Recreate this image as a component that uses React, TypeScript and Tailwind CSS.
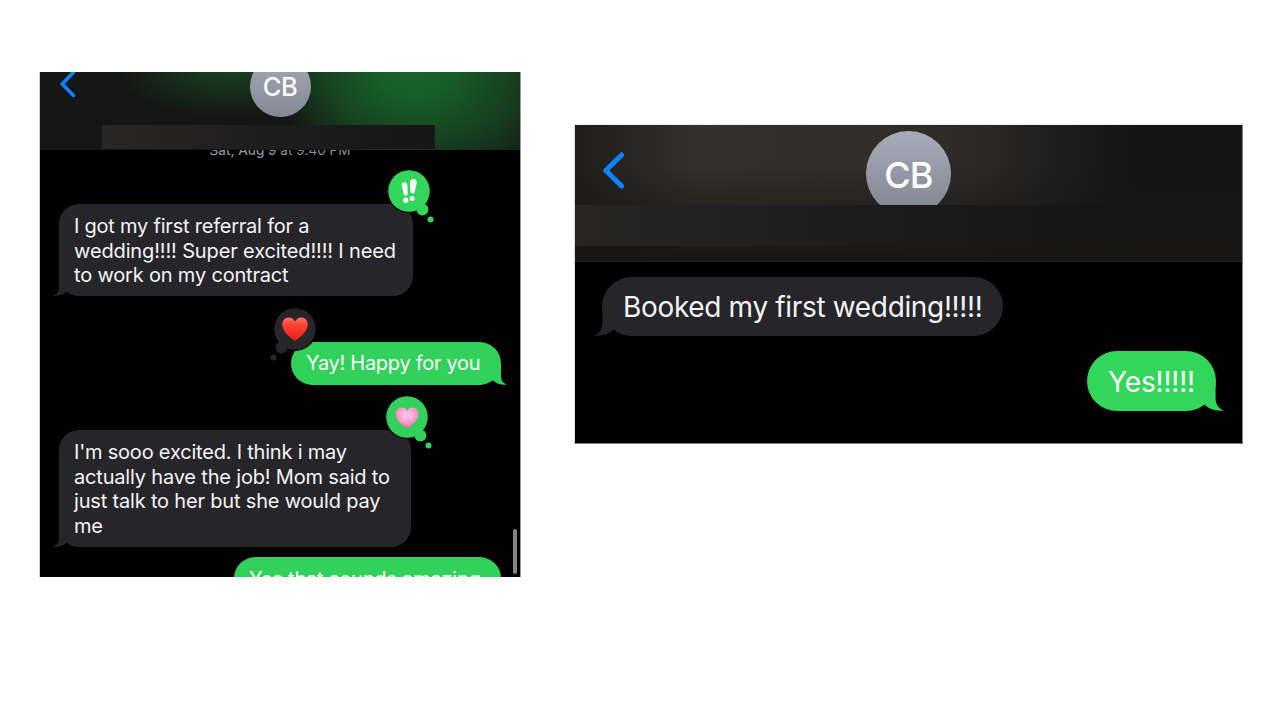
import React from 'react';
import clsx from 'clsx';

interface TailProps {
  side: 'left' | 'right';
  className: string;
}

const Tail: React.FC<TailProps> = ({ side, className }) => (
  <svg
    viewBox="0 0 20 20"
    className={clsx('absolute bottom-0 fill-current', side === 'right' && '-scale-x-100', className)}
  >
    <path d="M6 0 V10.5 C6 15.5 3.8 18.2 0 19.6 C5.2 20.4 10 19.2 13.8 15.6 L20 10 V0 Z" />
  </svg>
);

interface ReactionProps {
  side: 'left' | 'right';
  className: string;
  children: React.ReactNode;
}

// Tapback: big circle with two trailing dots
const Reaction: React.FC<ReactionProps> = ({ side, className, children }) => (
  <svg viewBox="0 0 48 56" className={clsx('absolute h-14 w-12', className)}>
    <g transform={side === 'left' ? 'translate(48 0) scale(-1 1)' : undefined}>
      <circle cx="22" cy="22" r="22" fill="#000" />
      <circle cx="22" cy="22" r="20.8" fill="currentColor" />
      <circle cx="35.4" cy="40.4" r="6" fill="currentColor" />
      <circle cx="43.5" cy="50.4" r="3" fill="currentColor" />
    </g>
    {children}
  </svg>
);

const HEART =
  'M0 12.4 C-4 9.6 -12.8 3.6 -12.8 -4 C-12.8 -8.2 -9.8 -11 -6.3 -11 C-3.5 -11 -1.2 -9.4 0 -6.9 C1.2 -9.4 3.5 -11 6.3 -11 C9.8 -11 12.8 -8.2 12.8 -4 C12.8 3.6 4 9.6 0 12.4 Z';

const Line: React.FC<{ className?: string; children: React.ReactNode }> = ({ className, children }) => (
  <span className={clsx('block whitespace-nowrap', className)}>{children}</span>
);

const ReferralChat: React.FC = () => (
  <section className="ml-[39px] mt-[72px] flex h-[505px] w-[482px] flex-col overflow-hidden border-l border-r border-l-[#cfcfcf] border-r-[#9c9c9c] bg-black">
    {/* Header */}
    <header className="relative flex h-[78px] shrink-0 justify-center overflow-hidden bg-[#151515] bg-[radial-gradient(ellipse_145px_115px_at_375px_-4px,#17652a_0%,#175d28_28%,#174521_60%,#15151500_100%),radial-gradient(ellipse_120px_54px_at_190px_-8px,#1a4823_0%,#172e1b_50%,#15151500_100%),radial-gradient(ellipse_100px_110px_at_440px_20px,#17371e_0%,#15151500_100%)]">
      <svg viewBox="0 0 18 30" className="absolute left-[19px] top-[-3px] h-[30px] w-[18px]">
        <path d="M14.5 3.2 L3.2 15 L14.5 26.4" fill="none" stroke="#0a84ff" strokeWidth="3.6" strokeLinecap="round" strokeLinejoin="round" />
      </svg>
      <div className="-mt-4 flex size-[61px] items-center justify-center rounded-full bg-linear-to-b from-[#a5aab8] to-[#858893] pt-0.5 text-[25.5px] font-medium tracking-[-0.4px] text-white">
        CB
      </div>
      <div className="absolute left-[62px] top-[53px] h-6 w-[333px] bg-linear-to-r from-[#292725] via-[#1e1d1d] to-[#161616]" />
    </header>

    {/* Messages */}
    <div className="flex flex-1 flex-col overflow-hidden">
      <p className="-mt-[9px] h-[18px] shrink-0 whitespace-nowrap text-center text-[13.5px] leading-[18px] tracking-[0.02px] text-[#8e8e93]">
        <span className="font-medium">Sat, Aug 9</span> at 9:40 PM
      </p>

      <div className="relative ml-[19px] mt-[45px] h-[92px] w-[354px] shrink-0 rounded-[20px] bg-[#26252a] px-[15px] pt-[10px] text-xl leading-[24.5px] text-[#f4f4f4]">
        <Tail side="left" className="-left-1.5 size-5 text-[#26252a]" />
        <Line className="tracking-[-0.22px]">I got my first referral for a</Line>
        <Line className="tracking-[-0.13px]">wedding!!!! Super excited!!!! I need</Line>
        <Line className="tracking-[-0.18px]">to work on my contract</Line>
        <Reaction side="right" className="-top-[35px] left-[328px] text-[#32d65b]">
          <g fill="#fff">
            <path d="M14.7 16.8 C14.4 14.4 15.4 13.2 17.2 13.2 C19.2 13.2 20.4 14.6 20.5 17 L20.6 24.4 C20.6 27.2 17.3 27.4 16.7 24.8 Z" />
            <circle cx="18.7" cy="31.2" r="2.6" />
            <path d="M23 14.2 C23 11.6 24.4 10 26.5 10 C28.7 10 29.9 11.7 29.7 14 L27.9 22.4 C27.3 25.2 23.6 25 23.4 22.2 Z" />
            <circle cx="25.1" cy="29.4" r="2.5" />
          </g>
        </Reaction>
      </div>

      <div className="relative ml-[251px] mt-[46px] h-[43px] w-[210px] shrink-0 rounded-[21.5px] bg-[#32d15b] px-[15px] pt-[9px] text-xl leading-[24.5px] text-white">
        <Tail side="right" className="-right-1.5 size-5 text-[#32d15b]" />
        <Line className="tracking-[-0.28px]">Yay! Happy for you</Line>
        <Reaction side="left" className="-left-[22.5px] -top-[35px] text-[#26252a]">
          <defs>
            <linearGradient id="redHeart" x1="0" y1="0" x2="0" y2="1">
              <stop offset="0" stopColor="#ff7668" />
              <stop offset="0.3" stopColor="#fb4436" />
              <stop offset="1" stopColor="#ee1f12" />
            </linearGradient>
          </defs>
          <path d={HEART} transform="translate(26 21.5)" fill="url(#redHeart)" />
        </Reaction>
      </div>

      <div className="relative ml-[19px] mt-[45px] h-[117px] w-[352px] shrink-0 rounded-[20px] bg-[#26252a] px-[15px] pt-[10px] text-xl leading-[24.5px] text-[#f4f4f4]">
        <Tail side="left" className="-left-1.5 size-5 text-[#26252a]" />
        <Line className="tracking-[-0.2px]">I'm sooo excited. I think i may</Line>
        <Line className="tracking-[-0.18px]">actually have the job! Mom said to</Line>
        <Line className="tracking-[-0.18px]">just talk to her but she would pay</Line>
        <Line className="tracking-[-0.2px]">me</Line>
        <Reaction side="right" className="-top-[35px] left-[325.5px] text-[#32d15b]">
          <defs>
            <radialGradient id="pinkHeart" cx="0.5" cy="0.35" r="0.65">
              <stop offset="0" stopColor="#ffc8ec" />
              <stop offset="0.55" stopColor="#ff9fd4" />
              <stop offset="1" stopColor="#f95fa0" />
            </radialGradient>
          </defs>
          <path d={HEART} transform="translate(22 22.3) scale(0.9)" fill="url(#pinkHeart)" />
        </Reaction>
      </div>

      <div className="ml-[194px] mt-[10px] h-[43px] w-[267px] shrink-0 rounded-[21.5px] bg-[#32d15b] px-[15px] pt-[10px] text-xl leading-[24.5px] text-white">
        <Line className="tracking-[-0.2px]">Yes that sounds amazing</Line>
      </div>
    </div>

    {/* Scrollbar */}
    <div className="relative h-0">
      <div className="absolute bottom-[3px] right-[3px] h-[45px] w-1 rounded-full bg-[#858585]" />
    </div>
  </section>
);

const BookedChat: React.FC = () => (
  <section className="ml-[53px] mt-[124px] flex h-[320px] w-[669px] flex-col overflow-hidden border border-b-[#777] border-l-[#ddd] border-r-[#7c7c7c] border-t-[#eee] bg-black">
    {/* Header */}
    <header className="relative flex h-[137px] shrink-0 justify-center overflow-hidden border-b border-[#222] bg-[#141414] bg-[linear-gradient(to_right,#1f1e1c_0%,#34302a_18%,#312e29_45%,#2c2a28_60%,#1c1c1c_74%,#14141400_84%)]">
      <div className="absolute inset-x-0 bottom-0 h-24 bg-linear-to-b from-transparent to-[#171615]" />
      <svg viewBox="0 0 26 40" className="absolute left-[26px] top-[25px] h-10 w-[26px]">
        <path d="M20.6 5 L4.8 20.5 L20.6 36" fill="none" stroke="#0a84ff" strokeWidth="5" strokeLinecap="round" strokeLinejoin="round" />
      </svg>
      <div className="relative mt-1.5 flex size-[85px] items-center justify-center rounded-full bg-linear-to-b from-[#a7acba] to-[#82858f] pt-0.5 text-[36px] font-medium tracking-[-0.7px] text-white">
        CB
      </div>
      <div className="absolute left-0 top-[80px] h-[41px] w-[561px] bg-linear-to-r from-[#272625] via-[#1c1c1c] to-[#151515]" />
    </header>

    {/* Messages */}
    <div className="flex flex-1 flex-col">
      <div className="relative ml-[27px] mt-[15px] h-[59px] w-[401px] rounded-[29.5px] bg-[#26252a] px-[21px] pt-[13px] text-[28px] leading-[34px] text-[#f4f4f4]">
        <Tail side="left" className="-left-2 size-7 text-[#26252a]" />
        <Line className="tracking-[-0.34px]">Booked my first wedding!!!!!</Line>
      </div>
      <div className="relative ml-[512px] mt-[15px] h-[60px] w-[129px] rounded-[30px] bg-[#32d65b] px-[21px] pt-[14px] text-[28px] leading-[34px] text-white">
        <Tail side="right" className="-right-2 size-7 text-[#32d65b]" />
        <Line className="tracking-[-0.15px]">Yes!!!!!</Line>
      </div>
    </div>
  </section>
);

export default function App() {
  return (
    <main className="flex h-[720px] w-[1280px] items-start overflow-hidden bg-white font-['Inter',sans-serif]">
      <ReferralChat />
      <BookedChat />
    </main>
  );
}
